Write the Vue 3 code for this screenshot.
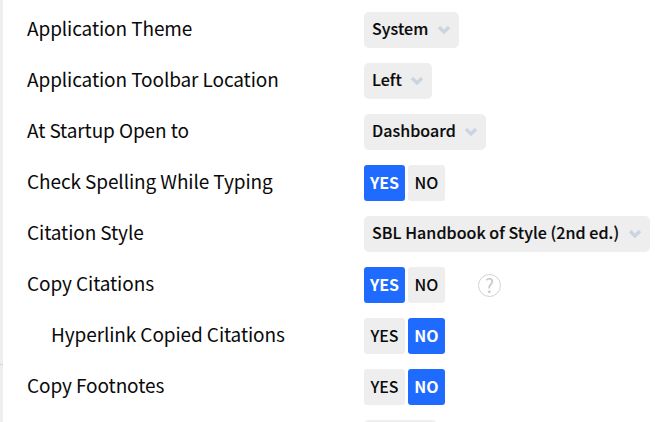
<script setup>
const settings = [
  { label: 'Application Theme', type: 'select', value: 'System' },
  { label: 'Application Toolbar Location', type: 'select', value: 'Left' },
  { label: 'At Startup Open to', type: 'select', value: 'Dashboard' },
  { label: 'Check Spelling While Typing', type: 'toggle', value: true },
  { label: 'Citation Style', type: 'select', value: 'SBL Handbook of Style (2nd ed.)' },
  { label: 'Copy Citations', type: 'toggle', value: true, help: true },
  { label: 'Hyperlink Copied Citations', type: 'toggle', value: false, nested: true },
  { label: 'Copy Footnotes', type: 'toggle', value: false },
  { label: '', type: 'select', value: '' }
]
</script>

<template>
  <main class="settings-page">
    <aside class="side-edge">
      <div class="side-edge-line"></div>
    </aside>
    <section class="settings-list">
      <div v-for="(setting, index) in settings" :key="index" class="setting-row">
        <div :class="['setting-label', { 'setting-label--nested': setting.nested }]">{{ setting.label }}</div>
        <div class="setting-control">
          <div v-if="setting.type === 'select'" :class="['select-box', { 'select-box--blank': !setting.value }]">
            <span class="select-value">{{ setting.value }}</span>
            <svg class="chevron" width="12" height="8" viewBox="0 0 12 8" fill="none">
              <path d="M1 1 L6 6 L11 1" stroke="#cbd5e0" stroke-width="3.4" />
            </svg>
          </div>
          <div v-else class="toggle">
            <button :class="['toggle-button', 'toggle-button--yes', { 'toggle-button--on': setting.value }]" type="button">YES</button>
            <button :class="['toggle-button', 'toggle-button--no', { 'toggle-button--on': !setting.value }]" type="button">NO</button>
            <span v-if="setting.help" class="help-icon">?</span>
          </div>
        </div>
      </div>
    </section>
  </main>
</template>

<style>
html, body {
  margin: 0;
  overflow: hidden;
  background: #ffffff;
}
</style>

<style scoped>
.settings-page {
  display: flex;
  width: 655px;
  height: 422px;
  overflow: hidden;
  font-family: "Noto Sans CJK SC", "Noto Sans", sans-serif;
  color: #0a0a0a;
  background: #ffffff;
}
.side-edge {
  flex: none;
  width: 3px;
  padding-top: 364px;
  box-sizing: border-box;
  background: #eeeeee;
}
.side-edge-line {
  height: 1px;
  background: #d4d4d4;
}
.settings-list {
  flex: 1;
  padding: 12px 0 0 24px;
}
.setting-row {
  display: flex;
  align-items: center;
  height: 36px;
  margin-bottom: 15px;
}
.setting-label {
  width: 337px;
  flex: none;
  padding-bottom: 6px;
  box-sizing: border-box;
  font-size: 19px;
  letter-spacing: -0.1px;
  white-space: nowrap;
}
.setting-label--nested {
  padding-left: 24px;
}
.select-box {
  display: flex;
  align-items: center;
  gap: 9.5px;
  height: 36px;
  padding: 0 9px 0 8px;
  box-sizing: border-box;
  font-size: 16px;
  font-weight: 500;
  letter-spacing: 0.06px;
  white-space: nowrap;
  background: #eeeeee;
  border-radius: 5px;
}
.select-value {
  padding-bottom: 5px;
  -webkit-text-stroke: 0.15px #0a0a0a;
}
.select-box--blank {
  width: 73px;
}
.chevron {
  flex: none;
}
.toggle {
  display: flex;
  align-items: center;
  gap: 3px;
}
.toggle-button {
  height: 36px;
  padding: 0 0 2px;
  font-family: inherit;
  font-size: 16px;
  font-weight: 500;
  color: #0a0a0a;
  background: #eeeeee;
  border: none;
  border-radius: 3px;
}
.toggle-button--yes {
  width: 41px;
}
.toggle-button--no {
  width: 37px;
}
.toggle-button--on {
  font-weight: 700;
  color: #ffffff;
  background: #1f6bff;
}
.help-icon {
  display: flex;
  align-items: center;
  justify-content: center;
  width: 23px;
  height: 23px;
  margin-left: 30px;
  box-sizing: border-box;
  font-size: 19px;
  line-height: 20px;
  color: #c8c8c8;
  border: 1.5px solid #d2d2d2;
  border-radius: 50%;
}
</style>
